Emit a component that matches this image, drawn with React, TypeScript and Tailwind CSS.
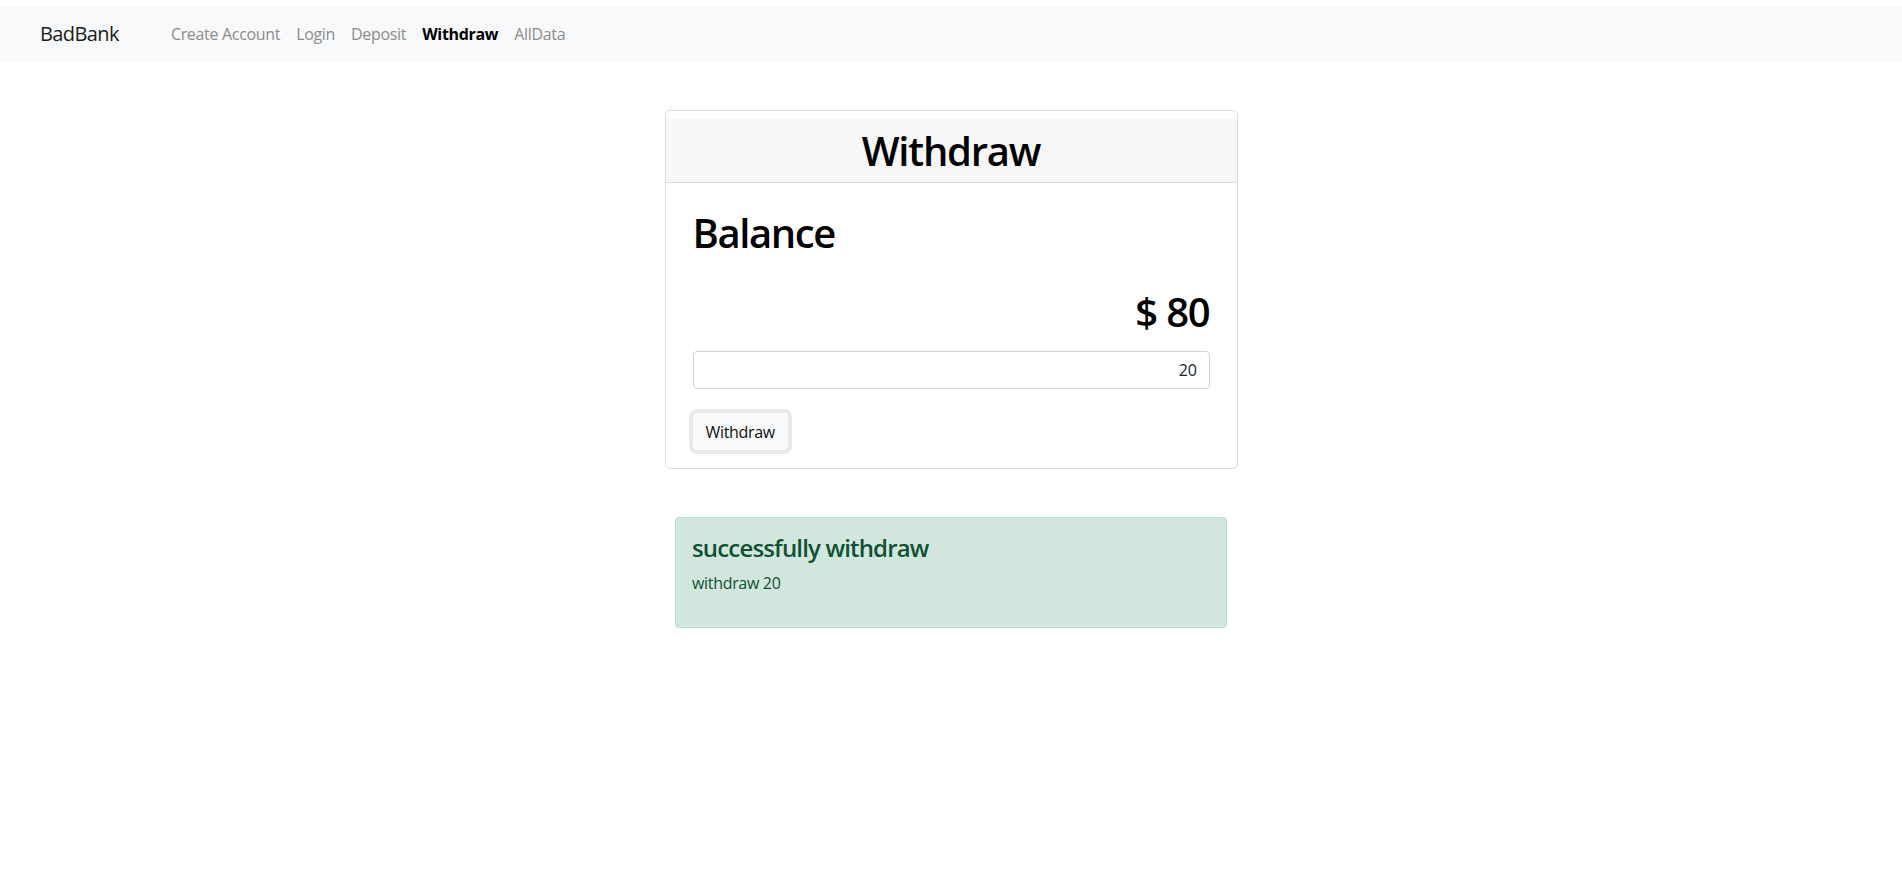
const font = "font-['Segoe_UI','Open_Sans',sans-serif] tracking-[-0.02em]";

function NavBar() {
  const links = ["Create Account", "Login", "Deposit", "Withdraw", "AllData"];
  return (
    <nav className="mt-[6px] h-[56px] bg-[#f8f9fa] flex items-center pl-[40px]">
      <span className="text-[20px] tracking-[-0.03em] text-[#1a1a1a] mr-[52px]">BadBank</span>
      <ul className="flex items-center gap-4">
        {links.map((l) => (
          <li
            key={l}
            className={
              l === "Withdraw"
                ? "text-[16px] font-bold text-black"
                : "text-[16px] text-[#8c8c8c]"
            }
          >
            {l}
          </li>
        ))}
      </ul>
    </nav>
  );
}

function WithdrawCard() {
  return (
    <div className="w-[573px] mx-auto mt-[48px] border border-[#dcdcdc] rounded-[5px] pt-[8px] pb-[14px]">
      <div className="h-[64px] bg-[#f7f7f7] border-b border-[#dcdcdc] flex items-center justify-center">
        <h1 className="text-[40px] font-semibold tracking-[-0.03em] leading-[1.2] text-black">Withdraw</h1>
      </div>
      <div className="px-[27px] pt-[26px]">
        <h2 className="text-[40px] font-semibold tracking-[-0.035em] leading-[1.2] text-black">Balance</h2>
        <div className="mt-[31px] text-right text-[40px] font-semibold tracking-[-0.03em] leading-[1.2] text-black">$ 80</div>
        <input
          className="mt-[15px] block w-full h-[38px] border border-[#ced4da] rounded-[4px] px-3 text-right text-[16px] text-[#212529] outline-none"
          defaultValue="20"
        />
        <button className="mt-[20px] -ml-[4px] h-[45px] px-[13px] border-[4px] border-[#e9e9ea] bg-[#f8f9fa] rounded-[8px] text-[16px] text-[#111]">
          Withdraw
        </button>
      </div>
    </div>
  );
}

function SuccessAlert() {
  return (
    <div className="w-[552px] mx-auto mt-[48px] bg-[#d1e7dd] border border-[#badbcc] rounded-[4px] p-4 text-[#0f5132]">
      <h4 className="text-[24px] font-semibold tracking-[-0.035em] leading-[1.2] mb-2">successfully withdraw</h4>
      <p className="text-[16px] leading-[24px] mb-4">withdraw 20</p>
    </div>
  );
}

export default function App() {
  return (
    <div className={`${font} min-h-[877px] bg-white`}>
      <NavBar />
      <WithdrawCard />
      <SuccessAlert />
    </div>
  );
}
